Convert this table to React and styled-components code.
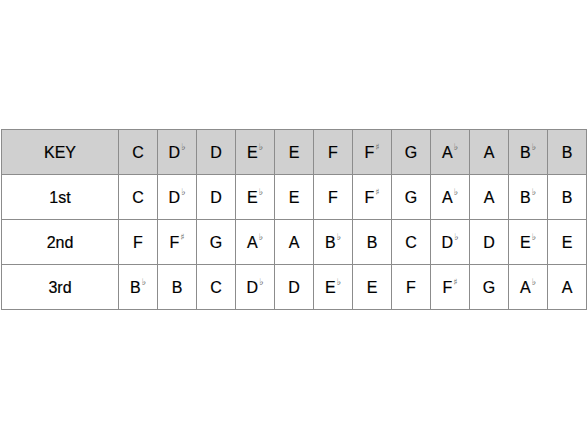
import React from "react";
import styled, { createGlobalStyle } from "styled-components";

const Global = createGlobalStyle`
  html, body {
    margin: 0;
    padding: 0;
    background: #fff;
  }
  body {
    font-family: "Liberation Sans", Arial, sans-serif;
  }
`

const Page = styled.div`
  width: 588px;
  height: 441px;
  padding: 129px 0 0 1px;
  box-sizing: border-box;
  background: #fff;
`

const Grid = styled.div`
  display: grid;
  grid-template-columns: 116px repeat(12, 38px);
  grid-auto-rows: 44px;
  gap: 1px;
  width: max-content;
  border: 1px solid #8c8c8c;
  background: #8c8c8c;
`

const Cell = styled.div`
  display: flex;
  align-items: center;
  justify-content: center;
  background: ${(p) => (p.$head ? "#d0d0d0" : "#fff")};
  color: #000;
  font-size: 16px;
  -webkit-text-stroke: 0.2px #000;
  padding-top: 1px;
`

const Note = styled.span`
  display: inline-flex;
  align-items: flex-start;
  line-height: 1;
`

const Acc = styled.span`
  font-size: 9px;
  line-height: 1;
  color: #666;
  -webkit-text-stroke: 0;
  margin-left: 1px;
  margin-top: -2px;
  font-family: "DejaVu Sans", sans-serif;
`

const keys = ["C", "Db", "D", "Eb", "E", "F", "F#", "G", "Ab", "A", "Bb", "B"]

const rows = [
  { label: "1st", notes: keys },
  { label: "2nd", notes: ["F", "F#", "G", "Ab", "A", "Bb", "B", "C", "Db", "D", "Eb", "E"] },
  { label: "3rd", notes: ["Bb", "B", "C", "Db", "D", "Eb", "E", "F", "F#", "G", "Ab", "A"] },
]

const NoteText = ({ n }) => {
  const acc = n[1]
  return (
    <Note>
      {n[0]}
      {acc && <Acc>{acc === "b" ? "♭" : "♯"}</Acc>}
    </Note>
  )
}

const App = () => {
  return (
    <Page>
      <Global />
      <Grid>
        <Cell $head>KEY</Cell>
        {keys.map((k) => (
          <Cell $head key={"h" + k}>
            <NoteText n={k} />
          </Cell>
        ))}
        {rows.map((r) => (
          <React.Fragment key={r.label}>
            <Cell>{r.label}</Cell>
            {r.notes.map((n, i) => (
              <Cell key={r.label + i}>
                <NoteText n={n} />
              </Cell>
            ))}
          </React.Fragment>
        ))}
      </Grid>
    </Page>
  )
}

export default App
